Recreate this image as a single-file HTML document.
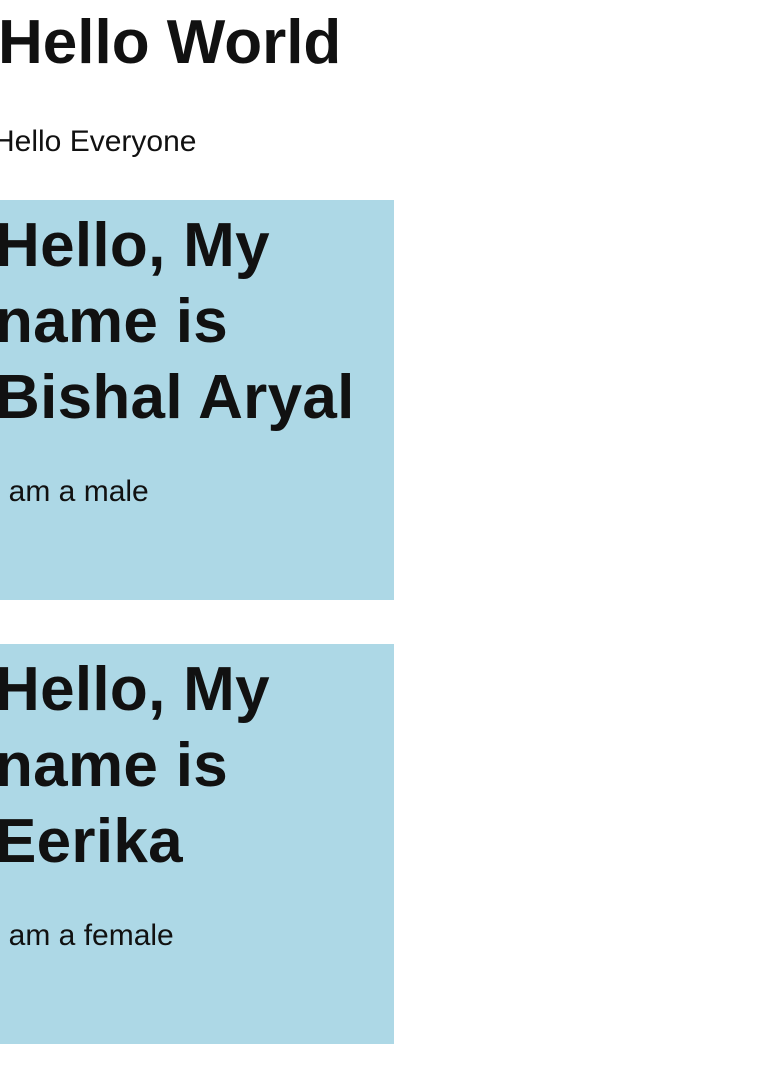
<!DOCTYPE html>
<html><head><meta charset="utf-8"><style>
html,body{margin:0;padding:0;background:#fff;width:768px;height:1084px;overflow:hidden;font-family:"Liberation Sans",Arial,sans-serif;color:#111;}
.a{position:absolute;white-space:nowrap;margin:0;}
h1.a{font-size:62px;font-weight:bold;line-height:62px;top:12px;left:-2px;}
.p{font-size:30px;line-height:32px;}
.box{position:absolute;left:0;width:394px;height:400px;background:#add8e6;}
.h{position:absolute;left:-5px;top:8px;font-size:62px;font-weight:bold;line-height:76px;margin:0;white-space:nowrap;letter-spacing:0.3px;}
.bp{position:absolute;left:-8px;top:276px;font-size:30px;line-height:32px;margin:0;}
</style></head><body>
<h1 class="a">Hello World</h1>
<p class="a p" style="top:126px;left:-7px;">Hello Everyone</p>
<div class="box" style="top:200px;">
<h2 class="h">Hello, My<br>name is<br>Bishal Aryal</h2>
<p class="bp">I am a male</p>
</div>
<div class="box" style="top:644px;">
<h2 class="h">Hello, My<br>name is<br>Eerika</h2>
<p class="bp">I am a female</p>
</div>
</body></html>
